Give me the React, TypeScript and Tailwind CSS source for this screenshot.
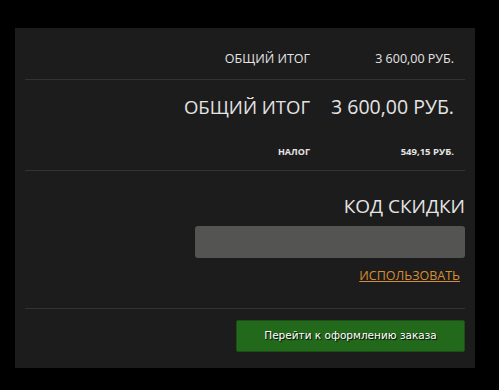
export default function App() {
  return (
    <div className="w-[499px] h-[390px] bg-black pt-[28px] pl-[15px]" style={{ fontFamily: '"Open Sans", sans-serif' }}>
      <div className="w-[460px] h-[340px] bg-[#1c1c1c] px-[10px] text-[#e4e4e4]">
        {/* subtotal */}
        <div className="flex items-center pt-[23px] pb-[13px] text-[12.5px] leading-[15px]">
          <div className="w-[285px] text-right">ОБЩИЙ ИТОГ</div>
          <div className="flex-1 text-right pr-[11px]">3 600,00 РУБ.</div>
        </div>
        <div className="h-px bg-[#333333]" />

        {/* total + tax */}
        <div className="pt-[13px] pb-[13px]">
          <div className="flex items-center leading-[28px]">
            <div className="w-[285px] text-right text-[18.5px]">ОБЩИЙ ИТОГ</div>
            <div className="flex-1 text-right pr-[11px] text-[19.5px]">3 600,00 РУБ.</div>
          </div>
          <div className="flex items-center mt-[25px] text-[9px] leading-[11px] font-bold">
            <div className="w-[285px] text-right">НАЛОГ</div>
            <div className="flex-1 text-right pr-[11px] text-[9.5px]">549,15 РУБ.</div>
          </div>
        </div>
        <div className="h-px bg-[#333333]" />

        {/* coupon */}
        <div className="flex flex-col items-end pt-[21px] pb-[23px]">
          <div className="text-[19px] leading-[28px]">КОД СКИДКИ</div>
          <input className="mt-[6px] w-[270px] h-[32px] rounded-[3px] bg-[#545452] outline-none" />
          <a href="#" className="mt-[9px] mr-[5px] text-[12.5px] leading-[18px] text-[#d58e33] underline">ИСПОЛЬЗОВАТЬ</a>
        </div>
        <div className="h-px bg-[#333333]" />

        {/* checkout */}
        <div className="flex justify-end pt-[11px]">
          <button
            className="w-[229px] h-[32px] rounded-[2px] bg-[#23691b] border border-[#1b4f16] text-white text-[10.5px]"
            style={{ fontFamily: '"DejaVu Sans", sans-serif', textShadow: '1px 1px 1px #000' }}
          >
            Перейти к оформлению заказа
          </button>
        </div>
      </div>
    </div>
  );
}
